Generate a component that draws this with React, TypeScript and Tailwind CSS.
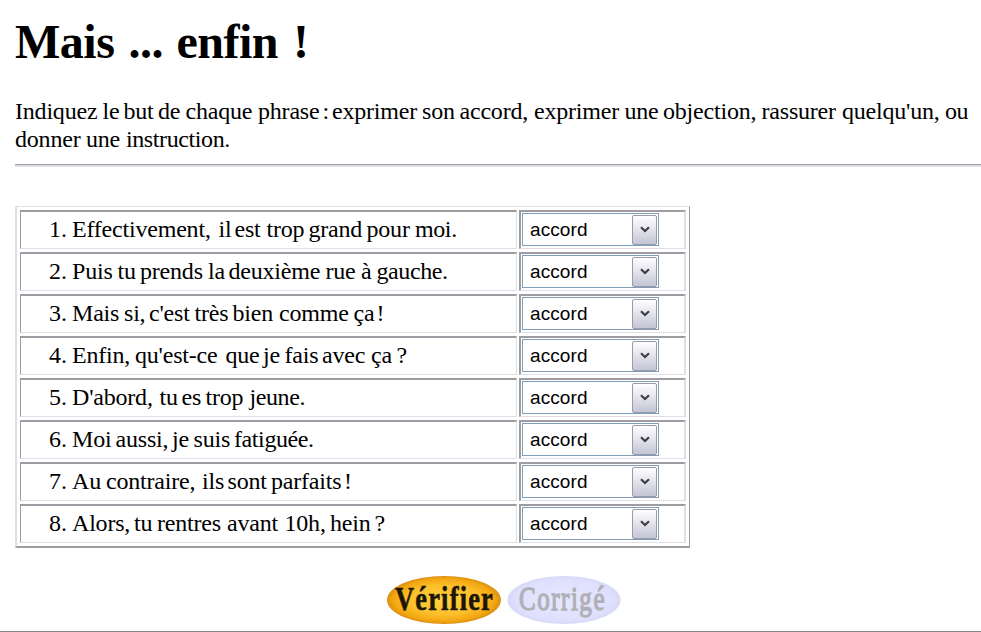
// A word and the x position at which it starts, measured from its line's left edge.
type Word = [text: string, start: number];

const phrases: Word[][] = [
  [["Effectivement,", 0], ["il", 146.5], ["est", 162.5], ["trop", 194.5], ["grand", 236.5], ["pour", 294.5], ["moi.", 343]],
  [["Puis", 0], ["tu", 45.5], ["prends", 68], ["la", 136], ["deuxième", 156.5], ["rue", 253.5], ["à", 289], ["gauche.", 304.5]],
  [["Mais", 0], ["si,", 52], ["c'est", 77], ["très", 122.5], ["bien", 160.5], ["comme", 207], ["ça", 281.5], ["!", 304.5]],
  [["Enfin,", 0], ["qu'est-ce", 63], ["que", 153.5], ["je", 191], ["fais", 212.5], ["avec", 250], ["ça", 299], ["?", 324.5]],
  [["D'abord,", 0], ["tu", 87.5], ["es", 109.5], ["trop", 133.5], ["jeune.", 177.5]],
  [["Moi", 0], ["aussi,", 43.5], ["je", 100], ["suis", 121.5], ["fatiguée.", 162]],
  [["Au", 0], ["contraire,", 34], ["ils", 130], ["sont", 155.5], ["parfaits", 199], ["!", 272]],
  [["Alors,", 0], ["tu", 62], ["rentres", 85], ["avant", 155], ["10h,", 212.5], ["hein", 258], ["?", 302.5]],
];

const introduction: Word[][] = [
  [
    ["Indiquez", 0], ["le", 87.5], ["but", 108.5], ["de", 143], ["chaque", 170.5], ["phrase", 243], [":", 307.5],
    ["exprimer", 317], ["son", 407], ["accord,", 444.5], ["exprimer", 519], ["une", 609.5], ["objection,", 648],
    ["rassurer", 746.5], ["quelqu'un,", 827], ["ou", 930],
  ],
  [["donner", 0], ["une", 71], ["instruction.", 111]],
];

const title: Word[] = [["Mais", 0.5], ["...", 114], ["enfin", 162], ["!", 278.5]];

function Line({ words }: { words: Word[] }) {
  return (
    <>
      {words.map(([text, start], i) => {
        const next = words[i + 1];
        return (
          <span
            key={i}
            className={next ? "inline-block whitespace-pre [word-spacing:-5px]" : "inline-block tracking-[-0.4px] whitespace-pre"}
            style={next ? { width: next[1] - start } : undefined}
          >
            {next ? text + " " : text}
          </span>
        );
      })}
    </>
  );
}

function Select() {
  return (
    <button className="flex h-[33px] w-[137px] items-center justify-between border border-[#7f9db9] bg-white pr-px pl-[7px]">
      <span className="font-['Liberation_Sans',Arial,sans-serif] text-[19px] leading-[30px] tracking-[0.1px]">accord</span>
      <span className="flex h-[30px] w-[25px] items-center justify-center rounded-[2px] border border-[#9a9aa8] bg-linear-to-b from-white via-[#e2e2ea] to-[#c4c5d6]">
        <svg width="10" height="7" viewBox="0 0 10 7">
          <path d="M1 1.2L5 5L9 1.2" fill="none" stroke="#3c3c42" strokeWidth="2.1" />
        </svg>
      </span>
    </button>
  );
}

function Row({ n, words }: { n: number; words: Word[] }) {
  return (
    <div className="flex h-[39px] gap-[2px]">
      <div className="flex w-[497px] border-t-2 border-r border-b border-l border-t-[#9c9ca2] border-r-[#dfdfe3] border-b-[#dfdfe3] border-l-[#9c9ca2] pl-[28px] leading-[35px] whitespace-nowrap">
        <span className="w-[23px] shrink-0">{n}.</span>
        <span className="tracking-[-0.2px]">
          <Line words={words} />
        </span>
      </div>
      <div className="w-[167px] border-t-2 border-r-2 border-b border-l-2 border-t-[#9c9ca2] border-r-[#dfdfe3] border-b-[#dfdfe3] border-l-[#9c9ca2] pt-px pl-px">
        <Select />
      </div>
    </div>
  );
}

export default function App() {
  return (
    <div className="flex h-[632px] w-[981px] flex-col overflow-hidden border-b border-[#858585] bg-white pl-[15px] font-['Liberation_Serif','Times_New_Roman',serif] text-[24px] text-black">
      <h1 className="mt-[14px] h-[56px] text-[48px] leading-[56px] font-bold tracking-[-0.5px] whitespace-nowrap">
        <Line words={title} />
      </h1>
      <p className="mt-[27px] leading-[28px] tracking-[-0.2px] whitespace-nowrap">
        {introduction.map((words, i) => (
          <span key={i} className="block h-[28px]">
            <Line words={words} />
          </span>
        ))}
      </p>
      <div className="mt-[11px] h-[3px] shrink-0 border-t border-t-[#9c9ca2] bg-[#dfdfe5]" />
      <div className="mt-[39px] flex h-[342px] w-[675px] shrink-0 flex-col gap-[3px] border-t border-r border-b-2 border-l-2 border-t-[#dfdfe3] border-r-[#9c9ca2] border-b-[#9c9ca2] border-l-[#dfdfe3] pt-[3px] pl-[3px]">
        {phrases.map((words, i) => (
          <Row key={i} n={i + 1} words={words} />
        ))}
      </div>
      <div className="mt-[28px] ml-[372px] flex gap-[6px]">
        <svg className="overflow-visible" width="114" height="48" viewBox="0 0 114 48">
          <defs>
            <radialGradient id="gold">
              <stop offset="0" stopColor="#ffd441" />
              <stop offset="0.6" stopColor="#fcc02c" />
              <stop offset="0.88" stopColor="#f3a812" />
              <stop offset="1" stopColor="#dc900f" />
            </radialGradient>
          </defs>
          <ellipse cx="57" cy="24" rx="57" ry="24" fill="url(#gold)" />
          <text x="8" y="34" textLength="99" lengthAdjust="spacingAndGlyphs" letterSpacing="1.5" fontSize="33" fontWeight="bold" fill="#1d1605" stroke="#1d1605" strokeWidth="0.6">Vérifier</text>
        </svg>
        <svg className="overflow-visible" width="114" height="48" viewBox="0 0 114 48">
          <defs>
            <radialGradient id="lilac">
              <stop offset="0" stopColor="#e6e7ff" />
              <stop offset="0.85" stopColor="#dfe0fd" />
              <stop offset="1" stopColor="#d6d8f7" />
            </radialGradient>
          </defs>
          <ellipse cx="57" cy="24" rx="56.5" ry="24" fill="url(#lilac)" />
          <text x="12" y="33.5" textLength="87" lengthAdjust="spacingAndGlyphs" letterSpacing="2" fontSize="33" fill="#b0b1b6" stroke="#b0b1b6" strokeWidth="1.3">Corrigé</text>
        </svg>
      </div>
    </div>
  );
}
